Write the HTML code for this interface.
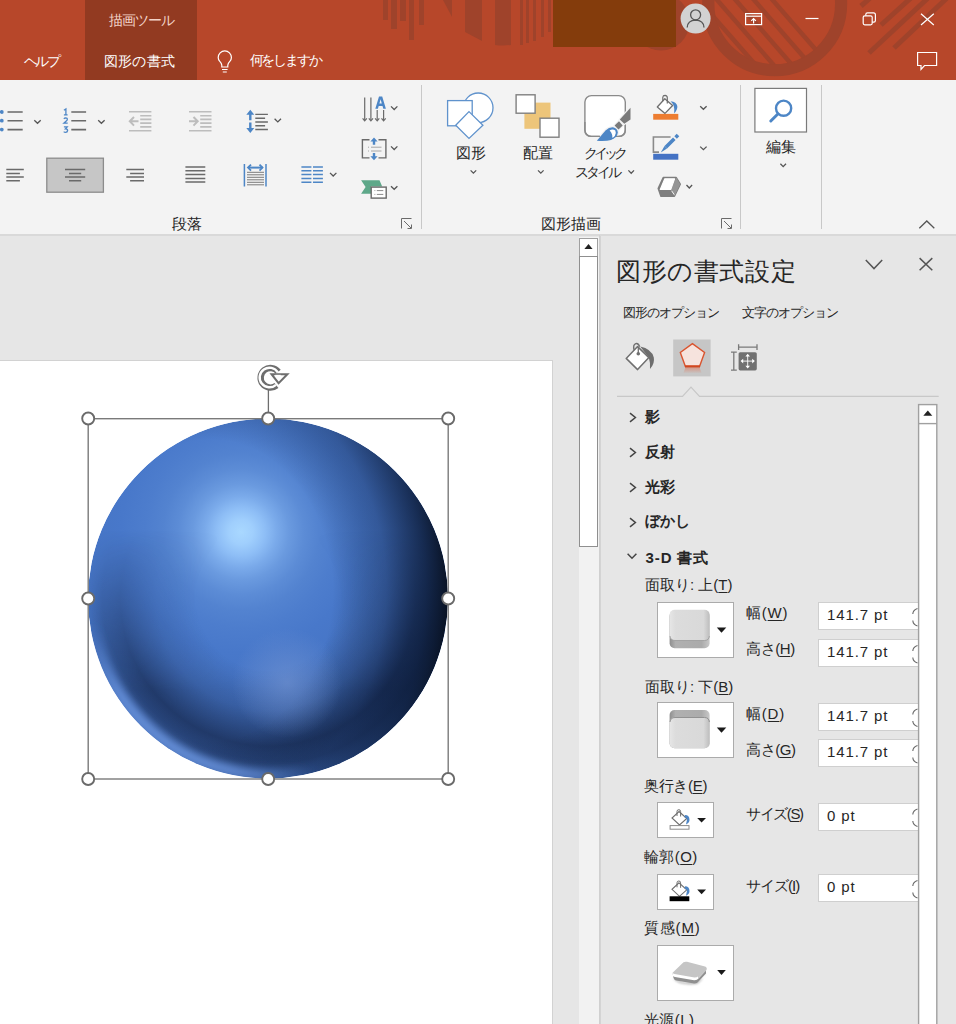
<!DOCTYPE html>
<html lang="ja">
<head>
<meta charset="utf-8">
<style>
*{margin:0;padding:0;box-sizing:border-box}
html,body{width:956px;height:1024px;overflow:hidden;background:#E6E6E6;font-family:"Liberation Sans",sans-serif;color:#262626}
.a{position:absolute}
.t{position:absolute;white-space:nowrap;line-height:1}
#title{left:0;top:0;width:956px;height:80px;background:#B7472A;overflow:hidden}
#ribbon{left:0;top:80px;width:956px;height:156px;background:#F3F3F3;border-bottom:2px solid #D9D9D9}
#canvas{left:0;top:236px;width:600px;height:789px;background:#E6E6E6}
#pane{left:600px;top:236px;width:356px;height:788px;background:#E6E6E6;border-left:1px solid #D4D4D4}
.fld{left:818px;width:100px;height:28px;background:#fff;border:1px solid #CFCFCF;border-right:none;font-size:15px;letter-spacing:0.9px;padding:4px 0 0 8px;line-height:16px;color:#262626;white-space:nowrap}
.box{background:#fff;border:1px solid #ABABAB}
u{text-decoration:underline;text-underline-offset:2px;text-decoration-thickness:1px}
.lbl{font-size:14px;color:#262626}
</style>
</head>
<body>
<!-- TITLE BAR -->
<div id="title" class="a">
<svg class="a" style="left:0;top:0" width="956" height="80">
 <g fill="#9F432B">
  <rect x="383" y="0" width="5" height="20"/>
  <rect x="391" y="0" width="6" height="29"/>
  <rect x="400" y="0" width="6" height="21"/>
  <rect x="409" y="0" width="5" height="40"/>
  <rect x="419" y="0" width="5" height="25"/>
  <polygon points="443,0 452,0 452,17"/>
  <polygon points="465,0 482,0 482,41 465,32"/>
  <path d="M495 0 H511 V45 Q503 46 495 45 Z"/>
  <rect x="520" y="0" width="3" height="45"/>
  <rect x="526" y="0" width="3" height="43"/>
  <rect x="533" y="0" width="3" height="41"/>
  <rect x="541" y="0" width="3" height="37"/>
  <rect x="548" y="0" width="3" height="32"/>
  <circle cx="661" cy="22" r="28.5"/>
 </g>
 <defs><clipPath id="inr"><circle cx="774.7" cy="3.8" r="61"/></clipPath></defs>
 <circle cx="774.7" cy="3.8" r="66.4" fill="none" stroke="#9F432B" stroke-width="12.2"/>
 <g stroke="#9F432B" stroke-width="4.5" clip-path="url(#inr)">
  <line x1="690" y1="-10" x2="760" y2="70"/>
  <line x1="705" y1="-14" x2="778" y2="70"/>
  <line x1="720" y1="-18" x2="793" y2="66"/>
  <line x1="735" y1="-22" x2="808" y2="62"/>
  <line x1="750" y1="-26" x2="823" y2="58"/>
 </g>
 <g stroke="#9F432B" stroke-width="5">
  <line x1="861" y1="6" x2="877" y2="-8"/>
  <line x1="881" y1="25" x2="912" y2="-3"/>
  <line x1="869" y1="53" x2="928" y2="-2"/>
  <line x1="894" y1="48" x2="947" y2="-2"/>
 </g>
 <rect x="553" y="0" width="123" height="47" fill="#843C0C"/>
</svg>
<div class="a" style="left:85px;top:0;width:112px;height:80px;background:#923A21"></div>
<svg class="a" style="left:0;top:0" width="956" height="80">
 <!-- lightbulb -->
 <g fill="none" stroke="#fff" stroke-width="1.2">
  <path d="M221.8 67V65.2Q221.4 63 219.6 61.2Q218.2 59.5 218.2 57.5A6.6 6.6 0 0 1 231.4 57.5Q231.4 59.5 230 61.2Q228.2 63 227.8 65.2V67Z"/>
  <path d="M222 69.5H227.6M222.8 72H226.8"/>
 </g>
 <!-- avatar -->
 <circle cx="695.6" cy="18.6" r="15" fill="#D2D2D2"/>
 <g fill="none" stroke="#555" stroke-width="1.3">
  <circle cx="695.6" cy="14.8" r="5"/>
  <path d="M687.2 27.5Q687.5 20.5 695.6 20.2Q703.7 20.5 704 27.5"/>
 </g>
 <!-- ribbon display options -->
 <g fill="none" stroke="#fff" stroke-width="1.2">
  <rect x="745.6" y="13.6" width="16" height="11"/>
  <path d="M745.6 16.2H761.6"/>
  <path d="M753.6 23.5V18.5M751.3 20.8L753.6 18.5L755.9 20.8"/>
 </g>
 <!-- minimize -->
 <path d="M805.5 18.5H818.5" stroke="#fff" stroke-width="1.2"/>
 <!-- restore -->
 <g fill="none" stroke="#fff" stroke-width="1.2">
  <rect x="863.2" y="15.8" width="9" height="9" rx="1.5"/>
  <path d="M865.8 15.8V14.5Q865.8 12.8 867.5 12.8H873.5Q875.4 12.8 875.4 14.7V20.5Q875.4 22.2 873.8 22.2H872.2"/>
 </g>
 <!-- close -->
 <path d="M921 13.8L933.8 25M933.8 13.8L921 25" stroke="#fff" stroke-width="1.2"/>
 <!-- comment -->
 <path d="M917.6 52.5H936.6V65.5H924.5L921 69.5V65.5H917.6Z" fill="none" stroke="#fff" stroke-width="1.2" stroke-linejoin="miter"/>
</svg>
<div class="t" style="left:109px;top:12.5px;font-size:14px;letter-spacing:-1px;color:#F3D3C8">描画ツール</div>
<div class="t" style="left:23.5px;top:54px;font-size:14px;letter-spacing:-2.3px;color:#fff">ヘルプ</div>
<div class="t" style="left:104px;top:54px;font-size:14px;letter-spacing:0.2px;color:#fff">図形の書式</div>
<div class="t" style="left:249.5px;top:53px;font-size:14px;letter-spacing:-2.2px;color:#fff">何をしますか</div>
</div>

<!-- RIBBON -->
<div id="ribbon" class="a"></div>
<svg class="a" style="left:0;top:0" width="956" height="240">
 <g fill="none" stroke="#6A6A6A" stroke-width="1.6">
  <!-- bullets lines -->
  <path d="M7.5 112H22.7M7.5 120.7H22.7M7.5 129.6H22.7"/>
  <!-- numbered lines -->
  <path d="M71.3 112H86.1M71.3 120.7H86.1M71.3 129.6H86.1"/>
 </g>
 <g fill="#4D86C6">
  <circle cx="1.8" cy="112" r="1.9"/><circle cx="1.8" cy="120.7" r="1.9"/><circle cx="1.8" cy="129.6" r="1.9"/>
 </g>
 <g fill="none" stroke="#4D86C6" stroke-width="1.3">
  <path d="M63.9 110.2L65.9 109V114.9M63.9 114.9H67.6"/>
  <path d="M63.9 118.8Q64.5 117.8 65.7 117.8Q67.4 117.9 67.3 119.4Q67.2 120.3 66 121.3L63.9 123.2H67.7"/>
  <path d="M63.9 126.9H67.2L65.4 128.9Q67.6 128.9 67.6 130.6Q67.4 132.3 65.6 132.3Q64.4 132.3 63.7 131.6"/>
 </g>
 <!-- chevrons -->
 <g fill="none" stroke="#555" stroke-width="1.3">
  <path d="M34.3 120.2l3.2 3.1l3.2-3.1"/>
  <path d="M98.2 120.2l3.2 3.1l3.2-3.1"/>
  <path d="M274.6 118.8l3.2 3.1l3.2-3.1"/>
  <path d="M330 172.9l3.2 3.1l3.2-3.1"/>
  <path d="M391 106.4l3.2 3.1l3.2-3.1"/>
  <path d="M391 146.4l3.2 3.1l3.2-3.1"/>
  <path d="M391 186.2l3.2 3.1l3.2-3.1"/>
  <path d="M470.6 170.4l2.8 2.8l2.8-2.8"/>
  <path d="M538 170.4l2.8 2.8l2.8-2.8"/>
  <path d="M628.4 170.4l2.8 2.9l2.8-2.9"/>
  <path d="M700.2 106.2l3.2 3.1l3.2-3.1"/>
  <path d="M700.2 146.6l3.2 3.1l3.2-3.1"/>
  <path d="M686.5 185l2.8 3l2.8-3"/>
  <path d="M780.4 163.8l2.8 2.8l2.8-2.8"/>
 </g>
 <!-- indent disabled -->
 <g fill="none" stroke="#BDBDBD" stroke-width="1.6">
  <path d="M129 111.8H151.4M140.2 115.7H151.4M140.2 119.4H151.4M140.2 123.1H151.4M140.2 126.9H151.4M129 130.7H151.4"/>
  <path d="M189 111.8H211.5M200.2 115.7H211.5M200.2 119.4H211.5M200.2 123.1H211.5M200.2 126.9H211.5M189 130.7H211.5"/>
  <path d="M130 121.3H138.5M134 117l-4.2 4.3l4.2 4.3" stroke-width="2"/>
  <path d="M189 121.3H197.5M193.5 117l4.2 4.3l-4.2 4.3" stroke-width="2"/>
 </g>
 <!-- line spacing -->
 <g fill="#4D86C6">
  <path d="M250.3 109.8l-4 5h2.8v5.5h2.4v-5.5h2.8z"/>
  <path d="M250.3 133.1l-4-5h2.8v-5.5h2.4v5.5h2.8z"/>
 </g>
 <g fill="none" stroke="#6A6A6A" stroke-width="1.4">
  <path d="M255.3 114.4H267.9M255.3 118.2H265.1M255.3 122H267.9M255.3 125.7H265.1M255.3 129.5H267.9"/>
 </g>
 <!-- align rows -->
 <g fill="none" stroke="#6A6A6A" stroke-width="1.5">
  <path d="M6.3 169.6H23.8M6.3 173.4H19.9M6.3 177.1H23.8M6.3 180.8H19.9"/>
  <path d="M126.3 169.6H144M130.1 173.4H144M126.3 177.1H144M130.1 180.8H144"/>
  <path d="M185.4 167H205.3M185.4 170.8H205.3M185.4 174.6H205.3M185.4 178.4H205.3M185.4 182.1H205.3"/>
 </g>
 <rect x="46.8" y="158.2" width="56.6" height="34" fill="#C6C6C6" stroke="#8C8C8C" stroke-width="1.3"/>
 <path d="M65 169.6H85.2M69 173.4H81.2M65 177.1H85.2M69 180.8H81.2" fill="none" stroke="#6A6A6A" stroke-width="1.5"/>
 <!-- distributed -->
 <g fill="none" stroke="#4D86C6" stroke-width="1.5">
  <path d="M244.4 163.9V186.5M266 163.9V186.5"/>
  <path d="M248 167.6H262.5" stroke-width="2"/>
  <path d="M251 164.6l-3 3l3 3M259.5 164.6l3 3l-3 3" stroke-width="1.8"/>
 </g>
 <g fill="none" stroke="#7A7A7A" stroke-width="1">
  <path d="M247 172.3H264M247 174.8H264M247 177.3H264M247 179.8H264M247 182.3H264M247 184.8H264"/>
 </g>
 <!-- columns -->
 <g fill="none" stroke="#4D86C6" stroke-width="1.5">
  <path d="M301.4 167H311.4M301.4 170.8H311.4M301.4 174.6H311.4M301.4 178.4H311.4M301.4 182.2H311.4"/>
  <path d="M313 167H322.9M313 170.8H322.9M313 174.6H322.9M313 178.4H322.9M313 182.2H322.9"/>
 </g>
 <!-- text direction -->
 <g fill="none" stroke="#6A6A6A" stroke-width="1.2">
  <path d="M364.7 97.6V120M370.9 97.6V120M377.2 110V120M383.6 110V120"/>
  <path d="M362.6 118.3l2.1 2.6l2.1-2.6M368.8 118.3l2.1 2.6l2.1-2.6M375.1 118.3l2.1 2.6l2.1-2.6M381.5 118.3l2.1 2.6l2.1-2.6"/>
 </g>
 <path d="M375.3 108.8L379 96.5H382.2L385.9 108.8H383.3L382.5 105.9H378.7L377.9 108.8ZM379.4 103.6H381.8L380.6 99.3Z" fill="#4D86C6" fill-rule="evenodd"/>
 <!-- align text -->
 <g fill="none" stroke="#6A6A6A" stroke-width="1.4">
  <path d="M369.5 139.7H362.4V157.9H369.5M378.5 139.7H385.9V157.9H378.5"/>
 </g>
 <g fill="none" stroke="#A6A6A6" stroke-width="1">
  <path d="M368 147.2H369M371 147.2H381.5M368 151H369M371 151H381.5"/>
 </g>
 <g fill="#4D86C6">
  <path d="M374 137.5l-3.6 4h2.4v3.3h2.4v-3.3h2.4z"/>
  <path d="M374 160.3l-3.6-4h2.4v-3.3h2.4v3.3h2.4z"/>
 </g>
 <!-- smartart -->
 <path d="M361.1 180.3H379.5L382.2 186.4H371V193.7H361.1L365.6 187z" fill="#5EA889"/>
 <rect x="371.2" y="187.1" width="15" height="11" fill="#fff" stroke="#6A6A6A" stroke-width="1.4"/>
 <path d="M374.5 190.6h.8M376.8 190.6h6.5M374.5 194.4h.8M376.8 194.4h6.5" stroke="#8A8A8A" stroke-width="1"/>
 <!-- separators -->
 <path d="M421.5 85V229M740.5 85V229M821.5 85V229" stroke="#C8C8C8" stroke-width="1"/>
 <!-- launchers -->
 <g fill="none" stroke="#6A6A6A" stroke-width="1">
  <path d="M401.5 228.5V218.5H411.5M404 221l7 7M407.5 228.5h4v-4"/>
  <path d="M721.5 228.5V218.5H731.5M724 221l7 7M727.5 228.5h4v-4"/>
 </g>
 <!-- collapse caret -->
 <path d="M919.3 228.2l7.5-7.2l7.5 7.2" fill="none" stroke="#555" stroke-width="1.3"/>
 <!-- shapes -->
 <circle cx="478.2" cy="107.8" r="14.8" fill="#fff" stroke="#5F92CC" stroke-width="1.3"/>
 <rect x="447.6" y="100.6" width="24.6" height="25.2" fill="#fff" stroke="#5F92CC" stroke-width="1.3"/>
 <path d="M469 111.6L482.9 125.2L469 138.4L455.7 125.2Z" fill="#fff" stroke="#5F92CC" stroke-width="1.3"/>
 <!-- arrange -->
 <rect x="524.4" y="102.6" width="26.1" height="26.2" fill="#EDC57A"/>
 <rect x="516.1" y="94.8" width="19" height="18.4" fill="#fff" stroke="#808080" stroke-width="1.4"/>
 <rect x="540" y="118.2" width="19" height="19" fill="#fff" stroke="#808080" stroke-width="1.4"/>
 <!-- quick styles -->
 <rect x="584.9" y="95.6" width="40.4" height="40.8" rx="6.5" fill="#fff" stroke="#8A8A8A" stroke-width="1.4"/>
 <g stroke="#F3F3F3" stroke-width="2.6" stroke-linejoin="round" fill="#F3F3F3">
  <path d="M630.5 107.8V119.4L624.3 123.8L619.8 119.6Z"/>
  <path d="M614.6 125.6L619 121.2L622.7 125.4L618.5 129.5Z"/>
  <path d="M596.8 140.8L605.5 130.5Q609 127 613 127.2Q617.5 128 617.8 132.5Q617.5 137.5 611 140Q606 141.5 596.8 140.8Z"/>
 </g>
 <path d="M584.9 122V129.9Q584.9 136.4 591.4 136.4H600M609 136.4H618.8Q625.3 136.4 625.3 129.9V125" fill="none" stroke="#8A8A8A" stroke-width="1.4"/>
 <path d="M630.5 107.8V119.4L624.3 123.8L619.8 119.6Z" fill="#7A7A7A"/>
 <path d="M614.6 125.6L619 121.2L622.7 125.4L618.5 129.5Z" fill="#7A7A7A"/>
 <path d="M596.8 140.8L605.5 130.5Q609 127 613 127.2Q617.5 128 617.8 132.5Q617.5 137.5 611 140Q606 141.5 596.8 140.8Z" fill="#4D86C6"/>
 <path d="M609.6 130.4Q612.8 128.6 615.3 130.6Q616.6 133 614.8 136Q613.5 137.5 612.2 137.8Q613 134 609.6 130.4Z" fill="#fff"/>
 <!-- fill bucket -->
 <path d="M664.8 98.8L672.6 105.5L665 113.4L657.3 107Z" fill="#fff" stroke="#6E6E6E" stroke-width="1.3" stroke-linejoin="round"/>
 <path d="M662.8 101.2V97.2Q663 95.3 665 95.3Q667.3 95.5 667.3 97.8V103.5" fill="none" stroke="#6E6E6E" stroke-width="1.2"/>
 <path d="M670.6 101.2Q676.5 102 677.3 106Q677.8 109.5 674.2 113.4Q674.6 108.5 673.8 106.2Q673 103.5 670.6 101.2Z" fill="#4D86C6"/>
 <rect x="653.2" y="113.9" width="25.1" height="5.8" fill="#ED7D31"/>
 <!-- line pencil -->
 <path d="M670.6 137H653.4V152.1H659" fill="none" stroke="#8A8A8A" stroke-width="1.6"/>
 <path d="M675.6 137.4L678 135M674.3 138.7L665.8 147.2" stroke="#4D86C6" stroke-width="3.6"/>
 <path d="M664.5 146L667 148.5L660.8 152.5Z" fill="#4D86C6"/>
 <rect x="653.2" y="153.8" width="25.1" height="5.9" fill="#4472C4"/>
 <!-- effects -->
 <path d="M663.3 177.6H676.2L680.2 184.2L674.4 196.2H661L658.3 188.4Z" fill="#7E7E7E" stroke="#7E7E7E" stroke-width="1.6" stroke-linejoin="round"/>
 <path d="M676.2 177.6L680.2 184.2L674.4 196.2L671.1 189.8Z" fill="#959595"/>
 <path d="M664.8 178.8H674.6L670.8 189.4H660.3Z" fill="#fff" stroke="#fff" stroke-width="1.2" stroke-linejoin="round"/>
 <path d="M671.6 190.8L674.2 194.6" stroke="#fff" stroke-width="0.9"/>
 <!-- editing -->
 <rect x="754.9" y="88.4" width="51.6" height="43.6" fill="#fff" stroke="#7A7A7A" stroke-width="1.2"/>
 <circle cx="783.6" cy="108.2" r="7.6" fill="none" stroke="#4D86C6" stroke-width="2.4"/>
 <path d="M777.6 114.2L770.8 121" stroke="#4D86C6" stroke-width="3" stroke-linecap="round"/>
</svg>
<div class="t lbl" style="left:172px;top:216px;font-size:15px">段落</div>
<div class="t lbl" style="left:456px;top:145px;font-size:15px">図形</div>
<div class="t lbl" style="left:523px;top:145px;font-size:15px">配置</div>
<div class="t lbl" style="left:584px;top:146px;font-size:14px;letter-spacing:-4px">クイック</div>
<div class="t lbl" style="left:575px;top:165px;font-size:14px;letter-spacing:-3px">スタイル</div>
<div class="t lbl" style="left:541px;top:216px;font-size:15px">図形描画</div>
<div class="t lbl" style="left:766px;top:139px;font-size:15px">編集</div>

<!-- CANVAS -->
<div id="canvas" class="a"></div>
<div class="a" style="left:0;top:360px;width:553px;height:664px;background:#fff;border-top:1px solid #D2D2D2;border-right:1px solid #D2D2D2"></div>
<div class="a" style="left:579px;top:237px;width:20px;height:787px;background:#F2F2F2"></div>
<div class="a" style="left:599px;top:235px;width:1px;height:789px;background:#D0D0D0"></div>
<div class="a" style="left:579px;top:238px;width:19px;height:19px;background:#fff;border:1px solid #A0A0A0"></div>
<svg class="a" style="left:579px;top:238px" width="19" height="19"><path d="M5.4 10.9L9.5 6L13.6 10.9Z" fill="#222"/></svg>
<div class="a" style="left:579px;top:256px;width:19px;height:291px;background:#fff;border:1px solid #8F8F8F"></div>
<svg class="a" style="left:0;top:360px" width="553" height="440">
 <defs>
  <radialGradient id="sp0" gradientUnits="userSpaceOnUse" cx="241" cy="172" r="300">
   <stop offset="0" stop-color="#A9D8FF"/>
   <stop offset="0.04" stop-color="#A0CFFD"/>
   <stop offset="0.08" stop-color="#8EBEF6"/>
   <stop offset="0.12" stop-color="#7AAAEA"/>
   <stop offset="0.16" stop-color="#6A9ADF"/>
   <stop offset="0.21" stop-color="#5C8CD6"/>
   <stop offset="0.26" stop-color="#5383D0"/>
   <stop offset="0.32" stop-color="#4D7DCD"/>
   <stop offset="0.4" stop-color="#4878CA"/>
   <stop offset="0.7" stop-color="#4370BE"/>
   <stop offset="1" stop-color="#3C66B0"/>
  </radialGradient>
  <radialGradient id="sp2" gradientUnits="userSpaceOnUse" cx="0" cy="0" r="1" gradientTransform="translate(210 230) scale(245 300)">
   <stop offset="0" stop-color="#000814" stop-opacity="0"/>
   <stop offset="0.5" stop-color="#000814" stop-opacity="0"/>
   <stop offset="0.72" stop-color="#06132E" stop-opacity="0.3"/>
   <stop offset="0.88" stop-color="#06122A" stop-opacity="0.72"/>
   <stop offset="1" stop-color="#03070F" stop-opacity="0.97"/>
  </radialGradient>
  <radialGradient id="sp3" gradientUnits="userSpaceOnUse" cx="268" cy="238.5" r="180">
   <stop offset="0" stop-color="#0A1530" stop-opacity="0"/>
   <stop offset="0.4" stop-color="#0A1530" stop-opacity="0"/>
   <stop offset="0.62" stop-color="#0A1530" stop-opacity="0.22"/>
   <stop offset="0.82" stop-color="#0A1530" stop-opacity="0.6"/>
   <stop offset="0.92" stop-color="#0A1530" stop-opacity="0.45"/>
   <stop offset="1" stop-color="#0A1530" stop-opacity="0.1"/>
  </radialGradient>
  <radialGradient id="sp4" gradientUnits="userSpaceOnUse" cx="287" cy="323" r="55">
   <stop offset="0" stop-color="#7C9BD6" stop-opacity="0.55"/>
   <stop offset="1" stop-color="#7C9BD6" stop-opacity="0"/>
  </radialGradient>
  <linearGradient id="rimg" gradientUnits="userSpaceOnUse" x1="120" y1="420" x2="200" y2="300">
   <stop offset="0" stop-color="#80AAF2" stop-opacity="1"/>
   <stop offset="0.5" stop-color="#6F9AE6" stop-opacity="0.85"/>
   <stop offset="0.8" stop-color="#5A85D0" stop-opacity="0"/>
  </linearGradient>
  <linearGradient id="mg" gradientUnits="userSpaceOnUse" x1="0" y1="170" x2="0" y2="330">
   <stop offset="0" stop-color="#fff" stop-opacity="0"/>
   <stop offset="1" stop-color="#fff" stop-opacity="1"/>
  </linearGradient>
  <mask id="mk" maskUnits="userSpaceOnUse" x="0" y="0" width="553" height="440"><rect x="0" y="0" width="553" height="440" fill="url(#mg)"/></mask>
  <clipPath id="spc"><circle cx="268" cy="238.5" r="180"/></clipPath>
  <filter id="bl" x="-20%" y="-20%" width="140%" height="140%"><feGaussianBlur stdDeviation="4"/></filter>
 </defs>
 <g clip-path="url(#spc)">
  <circle cx="268" cy="238.5" r="180" fill="url(#sp0)"/>
  <circle cx="268" cy="238.5" r="180" fill="url(#sp3)" mask="url(#mk)"/>
  <circle cx="268" cy="238.5" r="180" fill="url(#sp2)"/>
  <circle cx="287" cy="323" r="60" fill="url(#sp4)"/>
  <circle cx="268" cy="238.5" r="176" fill="none" stroke="url(#rimg)" stroke-width="10" filter="url(#bl)"/>
 </g>
 <!-- selection -->
 <rect x="88.2" y="58.7" width="360" height="360.3" fill="none" stroke="#7A7A7A" stroke-width="1.4"/>
 <path d="M268.4 29.5V58" stroke="#6E6E6E" stroke-width="1.3"/>
 <g fill="#fff" stroke="#6A6A6A" stroke-width="1.9">
  <circle cx="88.2" cy="58.5" r="6"/><circle cx="268.2" cy="58.5" r="6"/><circle cx="448.2" cy="58.5" r="6"/>
  <circle cx="88.2" cy="238.5" r="6"/><circle cx="448.2" cy="238.5" r="6"/>
  <circle cx="88.2" cy="419" r="6"/><circle cx="268.2" cy="419" r="6"/><circle cx="448.2" cy="419" r="6"/>
 </g>
 <g transform="translate(0 -360)">
  <path d="M276.5 385.5A9.8 9.8 0 1 1 278.2 371.8" fill="none" stroke="#6E6E6E" stroke-width="6.4"/>
  <path d="M276 384.8A9.8 9.8 0 1 1 277.8 372.4" fill="none" stroke="#fff" stroke-width="2.4"/>
  <path d="M271.5 374.2L287.4 374.2L278.6 383.2Z" fill="#fff" stroke="#6E6E6E" stroke-width="2"/>
  <path d="M275.2 375.6h5.5" stroke="#fff" stroke-width="1.6"/>
 </g>
</svg>

<!-- PANE -->
<div id="pane" class="a"></div>
<div class="t" style="left:616px;top:258.5px;font-size:25px;letter-spacing:0.6px;color:#262626">図形の書式設定</div>
<div class="t" style="left:623px;top:306px;font-size:13px;letter-spacing:-1px;color:#262626">図形のオプション</div>
<div class="t" style="left:742px;top:306px;font-size:13px;letter-spacing:-1px;color:#262626">文字のオプション</div>
<div class="t" style="left:645px;top:409px;font-size:15px;font-weight:bold">影</div>
<div class="t" style="left:645px;top:444px;font-size:15px;font-weight:bold">反射</div>
<div class="t" style="left:645px;top:479px;font-size:15px;font-weight:bold">光彩</div>
<div class="t" style="left:645px;top:513px;font-size:15px;font-weight:bold">ぼかし</div>
<div class="t" style="left:645.5px;top:549.5px;font-size:15px;letter-spacing:0.9px;font-weight:bold">3-D 書式</div>
<div class="t" style="left:645px;top:577px;font-size:15px">面取り: 上(<u>T</u>)</div>
<div class="t" style="left:746px;top:605px;font-size:15px;letter-spacing:0.8px">幅(<u>W</u>)</div>
<div class="t" style="left:746px;top:641px;font-size:15px;letter-spacing:-0.4px">高さ(<u>H</u>)</div>
<div class="t" style="left:645px;top:679px;font-size:15px">面取り: 下(<u>B</u>)</div>
<div class="t" style="left:746px;top:706px;font-size:15px;letter-spacing:0.8px">幅(<u>D</u>)</div>
<div class="t" style="left:746px;top:742px;font-size:15px;letter-spacing:-0.4px">高さ(<u>G</u>)</div>
<div class="t" style="left:644px;top:778px;font-size:15px;letter-spacing:-0.3px">奥行き(<u>E</u>)</div>
<div class="t" style="left:746px;top:806px;font-size:15px;letter-spacing:-1.4px">サイズ(<u>S</u>)</div>
<div class="t" style="left:644px;top:849px;font-size:15px;letter-spacing:0.4px">輪郭(<u>O</u>)</div>
<div class="t" style="left:746px;top:878px;font-size:15px;letter-spacing:-1px">サイズ(<u>I</u>)</div>
<div class="t" style="left:644px;top:920px;font-size:15px;letter-spacing:0.8px">質感(<u>M</u>)</div>
<div class="t" style="left:644px;top:1012px;font-size:15px;letter-spacing:0.4px">光源(<u>L</u>)</div>
<!-- fields -->
<div class="a fld" style="top:602px">141.7 pt</div>
<div class="a fld" style="top:639px">141.7 pt</div>
<div class="a fld" style="top:703px">141.7 pt</div>
<div class="a fld" style="top:739px">141.7 pt</div>
<div class="a fld" style="top:803px">0 pt</div>
<div class="a fld" style="top:874px">0 pt</div>
<!-- boxes -->
<div class="a box" style="left:657px;top:602px;width:77px;height:56px"></div>
<div class="a box" style="left:657px;top:702px;width:77px;height:56px"></div>
<div class="a box" style="left:657px;top:802px;width:57px;height:36px"></div>
<div class="a box" style="left:657px;top:874px;width:57px;height:36px"></div>
<div class="a box" style="left:657px;top:945px;width:77px;height:56px"></div>
<svg class="a" style="left:600px;top:235px" width="356" height="789">
 <g transform="translate(-600 -235)">
 <!-- header buttons -->
 <path d="M865.8 260L874 268.6L882.2 260" fill="none" stroke="#555" stroke-width="1.5"/>
 <path d="M919.6 258.1L932.3 270.2M932.3 258.1L919.6 270.2" stroke="#555" stroke-width="1.5"/>
 <!-- tab icons -->
 <rect x="673.2" y="339.5" width="37.4" height="36.9" fill="#C6C6C6"/>
 <path d="M692.4 343.6L704.6 352.5L699.6 366.3H685.3L680.3 352.5Z" fill="#F6E3DD" stroke="#D9542F" stroke-width="1.4"/>
 <path d="M685 366.5H700" stroke="#D2461F" stroke-width="2.2"/>
 <defs><linearGradient id="refl" x1="0" y1="0" x2="0" y2="1"><stop offset="0" stop-color="#E07A5F" stop-opacity="0.8"/><stop offset="1" stop-color="#E07A5F" stop-opacity="0"/></linearGradient></defs>
 <path d="M685.3 368H699.7L701.8 373.5H683.2Z" fill="url(#refl)" opacity="0.7"/>
 <path d="M640.2 346.6Q651.5 349 653.8 357.5Q655 363.5 650 369Q650.4 362 648.8 357.4Z" fill="#6E6E6E"/>
 <path d="M637.6 346.6L648.9 357.6L637.6 369.6L626.2 358.4Z" fill="#fff" stroke="#707070" stroke-width="1.5" stroke-linejoin="round"/>
 <path d="M634.2 350.2Q632.6 344.6 635.8 343.6Q638.6 343 639.6 346.8" fill="none" stroke="#707070" stroke-width="1.4"/>
 <path d="M638.3 347V353" stroke="#707070" stroke-width="1.3"/>
 <circle cx="638.3" cy="353.8" r="1.8" fill="#707070"/>
 <rect x="738.6" y="352.2" width="18.2" height="18.2" rx="1.6" fill="#717171"/>
 <path d="M738.6 347.1H757M738.6 344.2V350M757 344.2V350M733.8 352.2V370.2M731 352.2H736.8M731 370.2H736.8" stroke="#7A7A7A" stroke-width="1.3"/>
 <path d="M747.7 355.5V366.7M742 361.1H753.4" stroke="#fff" stroke-width="0.9"/>
 <path d="M747.7 353.8l-2.3 2.6h4.6zM747.7 368.4l-2.3-2.6h4.6zM740.6 361.1l2.6-2.3v4.6zM754.8 361.1l-2.6-2.3v4.6z" fill="#fff"/>
 <!-- divider with notch -->
 <path d="M617 396.3H682.5L691 387.2L699.5 396.3H938.7" fill="none" stroke="#C8C8C8" stroke-width="1.2"/>
 <!-- inner scrollbar -->
 <rect x="918.6" y="404.6" width="18.2" height="640" fill="#fff" stroke="#A0A0A0" stroke-width="1.4"/>
 <path d="M918.6 423.6H936.8" stroke="#A0A0A0" stroke-width="1.4"/>
 <path d="M923.3 415.8L927.8 410.5L932.3 415.8Z" fill="#222"/>
 <!-- section chevrons -->
 <g fill="none" stroke="#444" stroke-width="1.5">
  <path d="M630 413.2L635.4 417.5L630 421.8"/>
  <path d="M630 448.2L635.4 452.5L630 456.8"/>
  <path d="M630 483.2L635.4 487.5L630 491.8"/>
  <path d="M630 518.2L635.4 522.5L630 526.8"/>
  <path d="M627.6 553.8L632 558.2L636.4 553.8"/>
 </g>
 <!-- box icons -->
 <defs>
  <linearGradient id="bvf" x1="0" y1="0" x2="1" y2="0"><stop offset="0" stop-color="#E6E6E6"/><stop offset="0.15" stop-color="#DCDCDC"/><stop offset="0.85" stop-color="#D9D9D9"/><stop offset="1" stop-color="#BDBDBD"/></linearGradient>
  <linearGradient id="bvb" x1="0" y1="0" x2="1" y2="0"><stop offset="0" stop-color="#8E8E8E"/><stop offset="0.15" stop-color="#B0B0B0"/><stop offset="0.8" stop-color="#ABABAB"/><stop offset="1" stop-color="#C8C8C8"/></linearGradient>
  <filter id="sb" x="-30%" y="-30%" width="160%" height="160%"><feGaussianBlur stdDeviation="1.2"/></filter>
 </defs>
 <rect x="669.6" y="611" width="40" height="37.2" rx="5" fill="url(#bvb)"/>
 <rect x="669.6" y="609.7" width="40" height="30.8" rx="5" fill="url(#bvf)"/>
 <path d="M670 636Q670.5 640.5 675 640.5H704.5Q709 640.5 709.4 636" fill="none" stroke="#9A9A9A" stroke-width="0.8"/>
 <rect x="669.6" y="710" width="40" height="38.3" rx="5" fill="url(#bvb)"/>
 <rect x="669.6" y="717.2" width="40" height="31.1" rx="5" fill="url(#bvf)"/>
 <path d="M670 722Q670.5 717.5 675 717.5H704.5Q709 717.5 709.4 722" fill="none" stroke="#8A8A8A" stroke-width="0.9"/>
 <!-- buckets -->
 <g>
  <path d="M679 811.5L686.8 818.5L679.5 825L672 818Z" fill="#fff" stroke="#6E6E6E" stroke-width="1.1"/>
  <path d="M677 816V811.5a1.8 1.8 0 0 1 3.6 0V816.5" fill="none" stroke="#6E6E6E" stroke-width="1"/>
  <path d="M685 815Q689.5 815 689.5 820Q689.5 822.5 686 824.5L687 819.5Q686.8 817.5 684.5 817.2Z" fill="#4D86C6"/>
  <rect x="670.1" y="825.6" width="18.9" height="3.6" fill="#fff" stroke="#8A8A8A" stroke-width="1"/>
 </g>
 <g transform="translate(0 71.3)">
  <path d="M679 811.5L686.8 818.5L679.5 825L672 818Z" fill="#fff" stroke="#6E6E6E" stroke-width="1.1"/>
  <path d="M677 816V811.5a1.8 1.8 0 0 1 3.6 0V816.5" fill="none" stroke="#6E6E6E" stroke-width="1"/>
  <path d="M685 815Q689.5 815 689.5 820Q689.5 822.5 686 824.5L687 819.5Q686.8 817.5 684.5 817.2Z" fill="#4D86C6"/>
 </g>
 <rect x="669.6" y="896.3" width="19.7" height="4.9" fill="#000"/>
 <!-- material -->
 <path d="M673 978.5Q679 986 697 984Q702 981 706 972L705 975Q699 984 683 982Z" fill="#888" filter="url(#sb)" opacity="0.6"/>
 <path d="M683.5 962.2Q685 961.5 687 961.8L705 966.5Q707.5 967.5 706.5 970L698 978.5Q696.8 979.8 694.5 979.6L674.5 976Q671.5 975.3 672.6 972.8Z" fill="#C5C5C5"/>
 <path d="M672.5 973Q672 976 674.5 977L694 980.5Q697 981 698 979.5L698 976.5Q697 977.5 694.5 977.5L674.5 974Q673 973.5 672.5 973Z" fill="#fff"/>
 <path d="M673 975.8Q673.5 980 676 980.5L694 983.5Q697 984 698.5 981.5L706 973.5L706 970.5L698.5 978.5Q697 980.5 694 980.2L675 977Q673.2 976.8 673 975.8Z" fill="#8F8F8F"/>
 <!-- dropdown triangles -->
 <g fill="#1A1A1A">
  <path d="M716.8 627.4H726.3L721.5 632.8Z"/>
  <path d="M716.8 727.4H726.3L721.5 732.8Z"/>
  <path d="M697.2 818H706L701.6 822.6Z"/>
  <path d="M697.2 889.6H706L701.6 894.2Z"/>
  <path d="M717.2 970.1H725.8L721.5 975Z"/>
 </g>
 <!-- spinners -->
 <g fill="none" stroke="#666" stroke-width="1.1">
  <path d="M917.5 608.5Q913 610 912.8 614M917.5 626Q913 624.5 912.8 620.5"/>
  <path d="M917.5 645.5Q913 647 912.8 651M917.5 663Q913 661.5 912.8 657.5"/>
  <path d="M917.5 709Q913 710.5 912.8 714.5M917.5 726.5Q913 725 912.8 721"/>
  <path d="M917.5 745.5Q913 747 912.8 751M917.5 763Q913 761.5 912.8 757.5"/>
  <path d="M917.5 809Q913 810.5 912.8 814.5M917.5 826.5Q913 825 912.8 821"/>
  <path d="M917.5 880.5Q913 882 912.8 886M917.5 898Q913 896.5 912.8 892.5"/>
 </g>
 </g>
</svg>
</body>
</html>
